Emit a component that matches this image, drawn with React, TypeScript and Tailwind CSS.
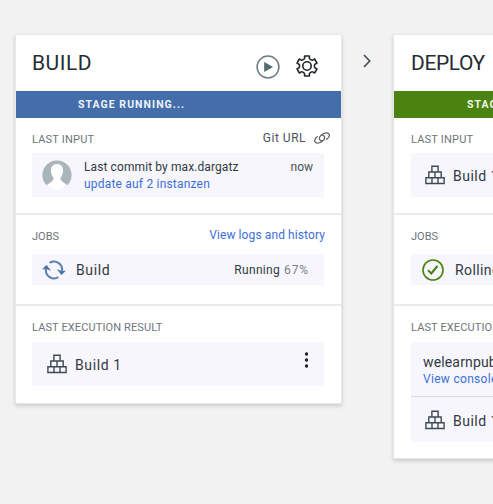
import type { ReactNode } from "react";

function BlocksIcon() {
  return (
    <svg className="h-5 w-5 shrink-0" viewBox="0 0 20 20" fill="none" stroke="#3f4b53" strokeWidth="1.4">
      <path d="M6.9 1.2h6.2v5.8H6.9zM3.8 7h6.2v5.8H3.8zM10 7h6.2v5.8H10zM.9 12.8h6.1v5.7H.9zM7 12.8h6v5.7H7zM13 12.8h6.1v5.7H13z" />
    </svg>
  );
}

function PlayIcon() {
  return (
    <svg className="h-6 w-6" viewBox="0 0 24 24" fill="none">
      <circle cx="12" cy="12" r="10.9" stroke="#6d7d84" strokeWidth="1.5" />
      <path d="M8.2 7v10L17 12z" fill="#536970" />
    </svg>
  );
}

function GearIcon() {
  return (
    <svg className="h-6 w-6" viewBox="0 0 24 24" fill="none" stroke="#20262a" strokeWidth="1.6" strokeLinejoin="round">
      <path d="M9.6 2h4.800v2.300c0 .8 2.500 2.200 3.200 1.800l2-1.100 2.400 4.100-2 1.100c-.8.5-.8 3.100 0 3.600l2 1.100-2.400 4.100-2-1.100c-.7-.4-3.200 1-3.200 1.800V22H9.600v-2.300c0-.8-2.500-2.200-3.200-1.800l-2 1.100L2 14.900l2-1.100c.8-.5.8-3.100 0-3.600L2 9.100 4.400 5l2 1.100c.7.4 3.200-1 3.200-1.800z" />
      <circle cx="12" cy="12" r="4.200" />
    </svg>
  );
}

function LinkIcon() {
  return (
    <svg className="h-4 w-4" viewBox="0 0 16 16" fill="none" stroke="#555b60" strokeWidth="1.2" strokeLinecap="round">
      <path d="M8.400 11C5.300 11 4.500 8 6.500 5.900 8.700 3.500 12.300 2 14.400 3.400c1.800 1.300.9 4.100-1.700 5.900" />
      <path d="M7.600 5c3.100 0 3.900 3 1.900 5.100-2.200 2.400-5.800 3.900-7.900 2.500C-.2 11.300.700 8.500 3.300 6.700" />
    </svg>
  );
}

function AvatarIcon() {
  return (
    <svg className="h-[30px] w-[30px]" viewBox="0 0 30 30">
      <circle cx="15" cy="15" r="14.6" fill="#a9b4bb" />
      <path d="M15 4c-4.100 0-6.300 3-6.100 6.800.1 3.200 1.100 5.400 2.700 7-.2 2.700-1.200 3.800-6.900 7.100C7.700 28.200 11.100 30 15 30s7.300-1.800 10.300-5.100c-5.700-3.300-6.700-4.400-6.900-7.100 1.600-1.600 2.600-3.800 2.700-7C21.300 7 19.100 4 15 4z" fill="#fff" />
    </svg>
  );
}

function RefreshIcon() {
  return (
    <svg className="h-5 w-6" viewBox="0 0 24 20" fill="none">
      <path d="M7.600 2.800A8.200 8.200 0 0 1 20 11M16.400 17.200A8.200 8.200 0 0 1 4 9" stroke="#5c7fb4" strokeWidth="2" />
      <path d="M4.500 5.200.8 9l3.500-.3 4 1.500zM19.500 14.800l3.700-3.800-3.500.3-4-1.500z" fill="#466fa8" stroke="#466fa8" strokeWidth=".6" strokeLinejoin="round" />
    </svg>
  );
}

function CheckIcon() {
  return (
    <svg className="h-[22px] w-[22px]" viewBox="0 0 22 22" fill="none" stroke="#4b8110">
      <circle cx="11" cy="11" r="10" strokeWidth="1.6" />
      <path d="m6 11.300 3.300 3.200L15.500 7" strokeWidth="2" />
    </svg>
  );
}

function Label({ children }: { children: ReactNode }) {
  return <div className="text-[11px] leading-4 whitespace-nowrap text-[#6d757b]">{children}</div>;
}

function Card({ title, band, actions, children }: { title: ReactNode; band: ReactNode; actions?: ReactNode; children: ReactNode }) {
  return (
    <section className="w-[327px] shrink-0 border border-[#e6e7e8] bg-white shadow-[0_2px_4px_rgba(0,0,0,0.16)]">
      <header className="flex h-14 items-center justify-between pl-4 pr-[22px]">
        <h2 className="text-[21px] leading-7 font-normal text-[#252d33]">{title}</h2>
        {actions}
      </header>
      {band}
      {children}
    </section>
  );
}

export default function App() {
  return (
    <main className="flex h-[504px] w-[493px] items-start overflow-hidden bg-[#f2f2f2] pt-[34px] pl-[15px] font-['Roboto',sans-serif] text-[#323a40]">
      <Card
        title={<span className="tracking-[0.5px]">BUILD</span>}
        actions={
          <div className="flex items-center gap-[15px] pt-2">
            <PlayIcon />
            <div className="-mt-0.5"><GearIcon /></div>
          </div>
        }
        band={<div className="flex h-[27px] items-center bg-[#446eaa] pl-[62px] pt-px text-[10.5px] font-bold tracking-[1.05px] text-[#edf3fa]">STAGE RUNNING...</div>}
      >
        <div className="h-[97px] border-b-2 border-[#ebebeb] px-4 pt-[13px]">
          <div className="flex h-[22px] justify-between">
            <div className="pt-px"><Label><span className="tracking-[0.2px]">LAST INPUT</span></Label></div>
            <div className="-mr-[5px] flex items-start gap-2 text-xs leading-[14px] tracking-[0.5px] text-[#4b5358]">Git URL <div className="-mt-px"><LinkIcon /></div></div>
          </div>
          <div className="flex h-11 w-[292px] items-center bg-[#f6f6fc] pl-[10px] pr-[11px]">
            <AvatarIcon />
            <div className="ml-3 grow pt-0.5 text-xs leading-[17px] whitespace-nowrap">
              <div className="tracking-[0.1px]">Last commit by max.dargatz</div>
              <div className="tracking-[0.2px] text-[#3b70d8]">update auf 2 instanzen</div>
            </div>
            <div className="self-start pt-[6px] text-xs leading-[17px] text-[#4b5358]">now</div>
          </div>
        </div>
        <div className="h-[91px] border-b-2 border-[#ebebeb] px-4 pt-[12px]">
          <div className="flex h-[27px] justify-between">
            <div className="pt-0.5"><Label>JOBS</Label></div>
            <div className="text-xs leading-4 tracking-[0.1px] text-[#3b70d8]">View logs and history</div>
          </div>
          <div className="flex h-[31px] w-[292px] items-center bg-[#f6f6fc] pl-[10px] pr-[15px]">
            <RefreshIcon />
            <span className="ml-[10px] grow pt-px text-sm tracking-[0.6px]">Build</span>
            <span className="text-xs tracking-[0.3px]">Running</span>
            <span className="ml-1 text-xs tracking-[0.9px] text-[#7c8388]">67%</span>
          </div>
        </div>
        <div className="h-[97px] px-4 pt-[13px]">
          <div className="h-[23px] pt-px"><Label><span className="tracking-[0.12px]">LAST EXECUTION RESULT</span></Label></div>
          <div className="flex h-11 w-[292px] items-center bg-[#f6f6fc] pl-[15px] pr-4">
            <BlocksIcon />
            <span className="ml-2 grow pt-0.5 text-sm tracking-[0.6px]">Build 1</span>
            <svg className="-mt-2 h-4 w-1" viewBox="0 0 4 16" fill="#1f2428">
              <circle cx="2.500" cy="2" r="1.700" /><circle cx="2.500" cy="8" r="1.700" /><circle cx="2.500" cy="14" r="1.700" />
            </svg>
          </div>
        </div>
      </Card>

      <div className="flex h-[53px] w-[51px] shrink-0 items-center justify-center pr-0.5">
        <svg className="h-[14px] w-2" viewBox="0 0 8 14" fill="none" stroke="#465159" strokeWidth="1.7"><path d="m1 1 5.700 6L1 13" /></svg>
      </div>

      <Card
        title={<span className="ml-px tracking-[-0.4px]">DEPLOY</span>}
        band={<div className="flex h-[27px] items-center bg-[#4c820f] pl-[73px] pt-px text-[10.5px] font-bold tracking-[1px] text-[#f0f7e8]">STAGE PASSED</div>}
      >
        <div className="h-[97px] border-b-2 border-[#ebebeb] pl-[17px] pr-4 pt-[14px]">
          <div className="h-[21px]"><Label><span className="tracking-[0.2px]">LAST INPUT</span></Label></div>
          <div className="flex h-11 w-[292px] items-center bg-[#f6f6fc] pl-[14px]">
            <BlocksIcon />
            <span className="ml-2 pt-0.5 text-sm tracking-[0.5px]">Build 1</span>
          </div>
        </div>
        <div className="h-[91px] border-b-2 border-[#ebebeb] pl-[17px] pr-4 pt-[14px]">
          <div className="h-[25px]"><Label>JOBS</Label></div>
          <div className="flex h-[31px] w-[292px] items-center bg-[#f6f6fc] pl-[11px]">
            <CheckIcon />
            <span className="ml-[11px] pt-px text-sm tracking-[0.4px]">Rolling Deploy</span>
          </div>
        </div>
        <div className="h-[152px] pl-[17px] pr-4 pt-[14px]">
          <div className="h-[22px]"><Label><span className="tracking-[0.12px]">LAST EXECUTION RESULT</span></Label></div>
          <div className="w-[292px] bg-[#f6f6fc]">
            <div className="h-[55px] border-b border-[#d7dbe1] pl-3 pt-[11px] whitespace-nowrap">
              <div className="text-sm leading-[18px] tracking-[0.15px]">welearnpublic</div>
              <div className="text-xs leading-4 tracking-[0.3px] text-[#3b70d8]">View console</div>
            </div>
            <div className="flex h-[45px] items-center pl-[14px]">
              <BlocksIcon />
              <span className="ml-2 pt-0.5 text-sm tracking-[0.5px]">Build 1</span>
            </div>
          </div>
        </div>
      </Card>
    </main>
  );
}
